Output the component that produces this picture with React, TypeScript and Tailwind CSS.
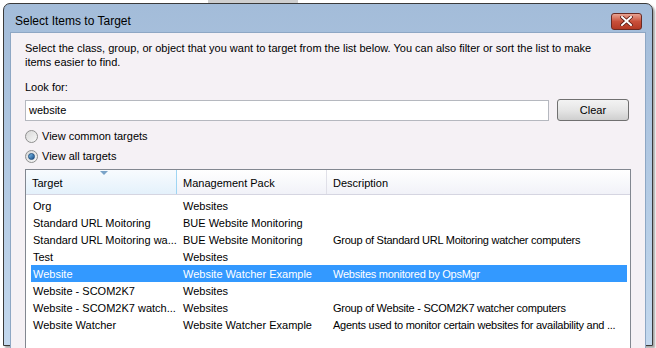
import React from "react";

const rows = [
  ["Org", "Websites", ""],
  ["Standard URL Moitoring", "BUE Website Monitoring", ""],
  ["Standard URL Moitoring wa...", "BUE Website Monitoring", "Group of Standard URL Moitoring watcher computers"],
  ["Test", "Websites", ""],
  ["Website", "Website Watcher Example", "Websites monitored by OpsMgr"],
  ["Website - SCOM2K7", "Websites", ""],
  ["Website - SCOM2K7 watch...", "Websites", "Group of Website - SCOM2K7 watcher computers"],
  ["Website Watcher", "Website Watcher Example", "Agents used to monitor certain websites for availability and ..."],
];

function Radio({ checked, label }: { checked?: boolean; label: string }) {
  return (
    <div className="flex items-center h-[20px]">
      <div className="w-[13px] h-[13px] rounded-full border border-[#8f8f8f] bg-gradient-to-br from-[#d8d8d8] to-[#f8f8f8] flex items-center justify-center">
        {checked && <div className="w-[7px] h-[7px] rounded-full bg-gradient-to-br from-[#7ec0ec] to-[#1a4f8a] border border-[#214f7f]" />}
      </div>
      <span className="ml-[4px]">{label}</span>
    </div>
  );
}

export default function App() {
  return (
    <div className="w-[656px] h-[348px] bg-white overflow-hidden relative" style={{ fontFamily: '"Liberation Sans", Arial, sans-serif' }}>
      <div className="absolute left-[208px] top-0 w-[90px] h-[4px] bg-[#cfcfcf]" />
      <div className="absolute left-[3px] top-[3px] w-[650px] h-[343px] border border-[#3a3a3a] rounded-t-[7px] bg-gradient-to-b from-[#a3bcd9] to-[#c3d8ee] flex flex-col shadow-[2px_2px_2px_rgba(0,0,0,0.35)]">
        <div className="h-[28px] flex items-center justify-between pl-[11px] pr-[10px] shrink-0">
          <span className="text-[12px] text-black mt-[6px]">Select Items to Target</span>
          <div className="w-[31px] h-[17px] mt-[6px] rounded-[3px] border border-[#6b2a22] bg-gradient-to-b from-[#e8a392] via-[#c9503a] to-[#b33a24] flex items-center justify-center">
            <svg width="13" height="10" viewBox="0 0 13 10">
              <path d="M2 1 L11 9 M11 1 L2 9" stroke="#5a1a12" strokeWidth="3.6" strokeLinecap="square" />
              <path d="M2 1 L11 9 M11 1 L2 9" stroke="#ffffff" strokeWidth="2" strokeLinecap="square" />
            </svg>
          </div>
        </div>
        <div className="flex-1 mx-[6px] border-l border-t border-r border-[#8ea7c4] bg-[#f5f1f5] pl-[14px] pr-[12px] pt-[8px] text-[11px] text-black leading-[14px]">
          <p>
            Select the class, group, or object that you want to target from the list below. You can also filter or sort the list to make
            <br />
            items easier to find.
          </p>
          <p className="mt-[11px]">Look for:</p>
          <div className="flex items-center mt-[5px]">
            <div className="w-[524px] h-[21px] border border-[#b5b8bf] bg-white flex items-center pl-[3px]">website</div>
            <div className="ml-[8px] w-[72px] h-[22px] rounded-[3px] border border-[#707070] bg-gradient-to-b from-[#f3f3f3] via-[#e6e6e6] to-[#cfcfcf] flex items-center justify-center">Clear</div>
          </div>
          <div className="mt-[5px]">
            <Radio label="View common targets" />
            <Radio checked label="View all targets" />
          </div>
          <div className="mt-[3px] w-[606px] h-[180px] border border-[#828790] bg-white">
            <div className="flex h-[25px] bg-gradient-to-b from-white to-[#f1f2f8] border-b border-[#d5d5e1] pr-[3px]">
              <div className="relative w-[151px] pl-[6px] pt-[2px] flex items-center bg-gradient-to-b from-[#f8fbfe] to-[#e4f1fb] border-r border-[#9fd5f3]">
                Target
                <svg className="absolute left-[74px] top-[1px]" width="8" height="4" viewBox="0 0 8 4">
                  <path d="M0 0 L8 0 L4 4 Z" fill="#7aa3c8" />
                </svg>
              </div>
              <div className="w-[150px] pl-[6px] pt-[2px] flex items-center border-r border-[#e0e0e8]">Management Pack</div>
              <div className="flex-1 pl-[6px] pt-[2px] flex items-center">Description</div>
            </div>
            <div className="pt-[2px] pl-[5px] pr-[3px]">
              {rows.map((r, i) => (
                <div key={i} className={`flex h-[17px] items-center whitespace-nowrap ${i === 4 ? "bg-[#3399ff] text-white" : ""}`}>
                  <div className="w-[146px] pl-[2px] overflow-hidden">{r[0]}</div>
                  <div className="w-[150px] pl-[6px] overflow-hidden">{r[1]}</div>
                  <div className="flex-1 pl-[6px] tracking-[-0.25px]">{r[2]}</div>
                </div>
              ))}
            </div>
          </div>
        </div>
      </div>
    </div>
  );
}
